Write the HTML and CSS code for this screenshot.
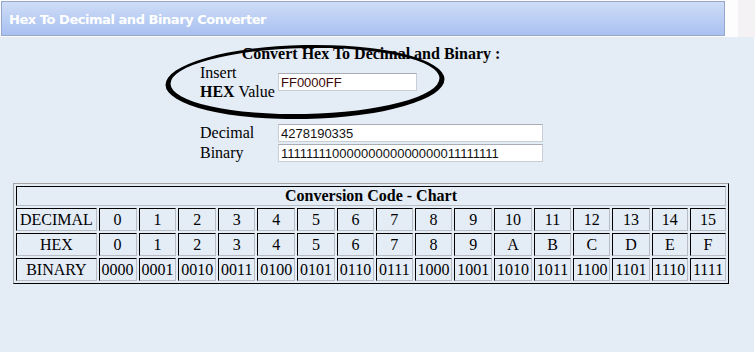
FILE: index.html
```html
<!DOCTYPE html>
<html>
<head>
<meta charset="utf-8">
<title>Hex To Decimal and Binary Converter</title>
<link rel="stylesheet" href="styles.css">
</head>
<body>
<div class="top">
  <div class="titlebar">Hex To Decimal and Binary Converter</div>
  <div class="gap"></div>
  <div class="side"></div>
</div>
<div class="panel">
  <div class="form">
    <div class="form-title">Convert Hex To Decimal and Binary :</div>
    <div class="row row-hex">
      <div class="label">Insert<br><b>HEX</b> Value</div>
      <input class="field short hexval" type="text" value="FF0000FF">
    </div>
    <div class="row row-out">
      <div class="label">Decimal</div>
      <input class="field long" type="text" value="4278190335">
    </div>
    <div class="row">
      <div class="label">Binary</div>
      <input class="field long" type="text" value="11111111000000000000000011111111">
    </div>
  </div>

  <table class="chart">
    <tr><th colspan="17" class="chart-title">Conversion Code - Chart</th></tr>
    <tr>
      <td class="head">DECIMAL</td>
      <td>0</td><td>1</td><td>2</td><td>3</td><td>4</td><td>5</td><td>6</td><td>7</td>
      <td>8</td><td>9</td><td>10</td><td>11</td><td>12</td><td>13</td><td>14</td><td>15</td>
    </tr>
    <tr>
      <td class="head">HEX</td>
      <td>0</td><td>1</td><td>2</td><td>3</td><td>4</td><td>5</td><td>6</td><td>7</td>
      <td>8</td><td>9</td><td>A</td><td>B</td><td>C</td><td>D</td><td>E</td><td>F</td>
    </tr>
    <tr>
      <td class="head">BINARY</td>
      <td>0000</td><td>0001</td><td>0010</td><td>0011</td><td>0100</td><td>0101</td><td>0110</td><td>0111</td>
      <td>1000</td><td>1001</td><td>1010</td><td>1011</td><td>1100</td><td>1101</td><td>1110</td><td>1111</td>
    </tr>
  </table>

  <svg class="circle-mark" viewBox="0 37 754 200" width="754" height="200" aria-hidden="true">
    <g transform="rotate(-1.2 305 82)">
      <path fill="#000" fill-rule="evenodd"
        d="M165.5,82 a139.5,37 0 1,0 279,0 a139.5,37 0 1,0 -279,0 Z
           M170.5,81 a134.5,33 0 1,0 269,0 a134.5,33 0 1,0 -269,0 Z"/>
    </g>
  </svg>
</div>
</body>
</html>
```
FILE: styles.css
```css
html, body {
  margin: 0;
  padding: 0;
}

body {
  background: #ffffff;
  font-family: "Liberation Serif", "Times New Roman", serif;
  color: #000;
  width: 755px;
  height: 354px;
  overflow: hidden;
}

.top {
  display: flex;
  height: 37px;
  background: #fbfbfc;
}

.titlebar {
  box-sizing: border-box;
  width: 724px;
  height: 35px;
  margin: 1px 0 0 1px;
  border: 1px solid #97a7cc;
  background: linear-gradient(#cedcf6, #a9c1f1);
  color: #ffffff;
  font: bold 13px "DejaVu Sans", Verdana, sans-serif;
  letter-spacing: -0.45px;
  line-height: 33px;
  padding: 1px 0 0 7px;
}

.gap {
  width: 13px;
  background: #fdfdfd;
}

.side {
  flex: 1;
  background: #f4f2f5;
}

.panel {
  position: relative;
  box-sizing: border-box;
  width: 754px;
  height: 315px;
  background: #e4ecf6;
  padding-top: 8px;
}

.form {
  width: 346px;
  margin-left: 198px;
  font-size: 16px;
}

.form-title {
  font-weight: bold;
  text-align: center;
  line-height: 18px;
}

.row {
  display: grid;
  grid-template-columns: 80px 266px;
  align-items: center;
  height: 20px;
}

.row-hex {
  height: 38px;
  margin-bottom: 22px;
}

.label {
  padding-left: 2px;
  line-height: 20px;
}

.row-hex .label {
  line-height: 19px;
}

.field {
  box-sizing: border-box;
  height: 18px;
  margin: 0;
  padding: 0 2px;
  border: 1px solid #c9ced6;
  border-top-color: #a9aeb6;
  background: #ffffff;
  font: 13px "Liberation Sans", Arial, sans-serif;
  color: #111;
  outline: none;
}

.short {
  width: 139px;
}

.long {
  width: 265px;
}

.hexval {
  color: #3a0808;
}

.chart {
  box-sizing: border-box;
  width: 716px;
  margin: 20px 0 0 13px;
  border-collapse: separate;
  border-spacing: 2px;
  border: 1px solid;
  border-color: #a3a3a3 #000 #000 #a3a3a3;
  font-size: 16px;
}

.chart td,
.chart th {
  box-sizing: border-box;
  border: 1px solid;
  border-color: #000 #b9bcc2 #b9bcc2 #000;
  padding: 0 1px;
  text-align: center;
  height: 23px;
  line-height: 18px;
}

.chart .chart-title {
  height: 20px;
  line-height: 16px;
  font-weight: bold;
}

.circle-mark {
  position: absolute;
  left: 0;
  top: 0;
  pointer-events: none;
}
```
